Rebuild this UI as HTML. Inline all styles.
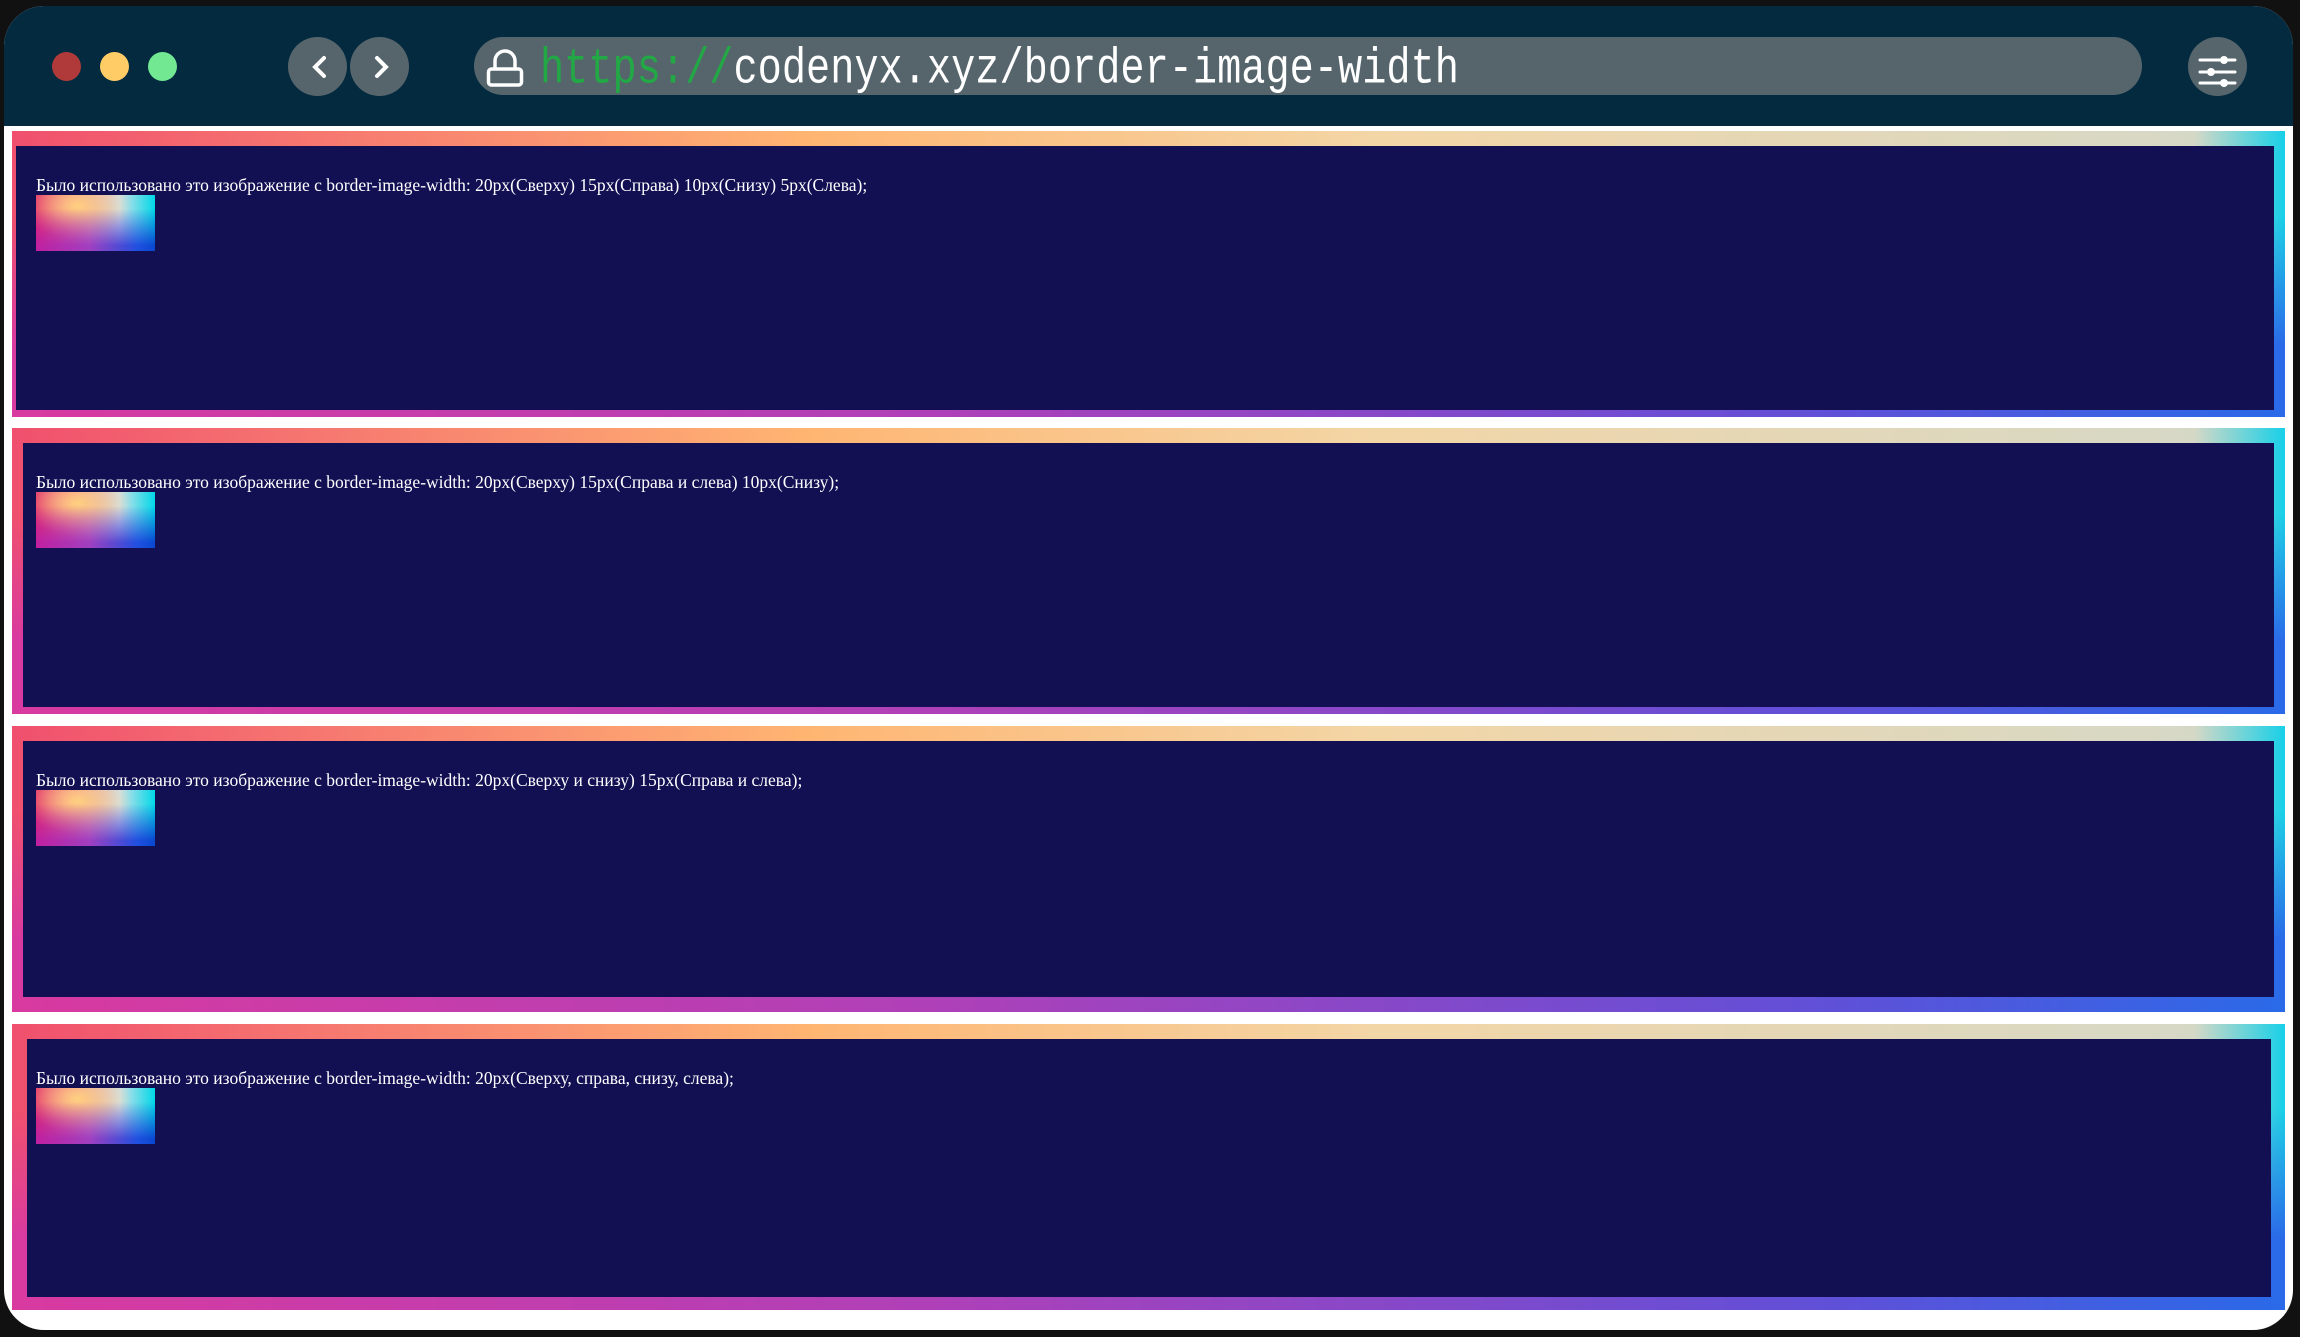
<!DOCTYPE html>
<html><head><meta charset="utf-8"><style>
html,body{margin:0;padding:0;background:#111;width:2300px;height:1337px;overflow:hidden}
.frame{position:absolute;left:4px;top:6px;width:2289px;height:1324px;border-radius:40px;background:#fff;overflow:hidden}
.head{position:absolute;left:0;top:0;width:100%;height:120px;background:#032a3f}
.dot{position:absolute;top:46px;width:29px;height:29px;border-radius:50%}
.nav{position:absolute;top:31px;width:59px;height:59px;border-radius:50%;background:#56656c}
.url{position:absolute;left:470px;top:31px;width:1668px;height:58px;border-radius:29px;background:#56656c}
.utext{position:absolute;left:536px;top:29px;font-family:"Liberation Mono","DejaVu Sans Mono",monospace;font-size:40.3px;line-height:70px;color:#fff;white-space:pre;transform:scaleY(1.25);transform-origin:left center}
.utext span{color:#22a845}
.box{position:absolute;left:8px;width:2273px;height:286px;overflow:hidden}
.g1{position:absolute;inset:0;background:linear-gradient(to right,#f0506e,#ffb572 35%,#f3d6a6 60%,#d6d8c6 96%,#18d0e8)}
.g2{position:absolute;inset:0;background:linear-gradient(to right,#d83aa0,#b040b8 40%,#6050d8 80%,#2a6ae8);-webkit-mask-image:linear-gradient(to bottom,transparent 30%,#000 75%);mask-image:linear-gradient(to bottom,transparent 30%,#000 75%)}
.in{position:absolute;background:#120f52}
.t{position:absolute;left:24px;font-family:"Liberation Serif",serif;font-size:17.5px;color:#fff;white-space:nowrap}
.img{position:absolute;left:24px;width:119px;height:56px;overflow:hidden}
.i1{position:absolute;inset:0;background:radial-gradient(ellipse 45% 60% at 35% 20%,#ffd080,rgba(255,200,128,0) 100%),linear-gradient(to right,#e02a6a,#f07a90 30%,#d0e0e8 70%,#00d8e8)}
.i2{position:absolute;inset:0;background:linear-gradient(to right,#c020a0,#a040c0 45%,#2050e0 85%,#0848d0);-webkit-mask-image:linear-gradient(to bottom,transparent 25%,#000 90%);mask-image:linear-gradient(to bottom,transparent 25%,#000 90%)}
</style></head><body>
<div class="frame">
 <div class="head">
  <div class="dot" style="left:48px;background:#b03a3a"></div>
  <div class="dot" style="left:96px;background:#ffcc66"></div>
  <div class="dot" style="left:144px;background:#72e893"></div>
  <div class="nav" style="left:284px"></div>
  <div class="nav" style="left:346px"></div>
  <svg style="position:absolute;left:284px;top:31px" width="130" height="59"><path d="M36 21 L27 30 L36 39" stroke="#fff" stroke-width="4" fill="none" stroke-linecap="round"/><path d="M89 21 L98 30 L89 39" stroke="#fff" stroke-width="4" fill="none" stroke-linecap="round"/></svg>
  <div class="url"></div>
  <svg style="position:absolute;left:482px;top:41px" width="40" height="40"><path d="M9 22 V14 a10 10 0 0 1 20 0 V22" stroke="#fff" stroke-width="3.5" fill="none"/><rect x="2.5" y="22" width="33" height="16" rx="3" stroke="#fff" stroke-width="3.5" fill="none"/></svg>
  <div class="utext"><span>https://</span>codenyx.xyz/border-image-width</div>
  <div class="nav" style="left:2184px;background:#56656c"></div>
  <svg style="position:absolute;left:2184px;top:31px" width="59" height="59"><g stroke="#fff" stroke-width="3" stroke-linecap="round"><line x1="12" y1="23" x2="47" y2="23"/><line x1="12" y1="35" x2="47" y2="35"/><line x1="12" y1="46" x2="47" y2="46"/></g><g fill="#fff"><circle cx="36" cy="23" r="4"/><circle cx="23" cy="35" r="4"/><circle cx="36" cy="46" r="4"/></g></svg>
 </div>

 <div class="box" style="top:125px">
  <div class="g1"></div><div class="g2"></div>
  <div class="in" style="left:4px;top:15px;right:11px;bottom:7px"></div>
  <div class="t" style="top:44px">Было использовано это изображение с border-image-width: 20px(Сверху) 15px(Справа) 10px(Снизу) 5px(Слева);</div>
  <div class="img" style="top:64px"><div class="i1"></div><div class="i2"></div></div>
 </div>
 <div class="box" style="top:422px">
  <div class="g1"></div><div class="g2"></div>
  <div class="in" style="left:11px;top:15px;right:11px;bottom:7px"></div>
  <div class="t" style="top:44px">Было использовано это изображение с border-image-width: 20px(Сверху) 15px(Справа и слева) 10px(Снизу);</div>
  <div class="img" style="top:64px"><div class="i1"></div><div class="i2"></div></div>
 </div>
 <div class="box" style="top:720px">
  <div class="g1"></div><div class="g2"></div>
  <div class="in" style="left:11px;top:15px;right:11px;bottom:15px"></div>
  <div class="t" style="top:44px">Было использовано это изображение с border-image-width: 20px(Сверху и снизу) 15px(Справа и слева);</div>
  <div class="img" style="top:64px"><div class="i1"></div><div class="i2"></div></div>
 </div>
 <div class="box" style="top:1018px">
  <div class="g1"></div><div class="g2"></div>
  <div class="in" style="left:15px;top:15px;right:14px;bottom:13px"></div>
  <div class="t" style="top:44px">Было использовано это изображение с border-image-width: 20px(Сверху, справа, снизу, слева);</div>
  <div class="img" style="top:64px"><div class="i1"></div><div class="i2"></div></div>
 </div>
</div>
</body></html>
